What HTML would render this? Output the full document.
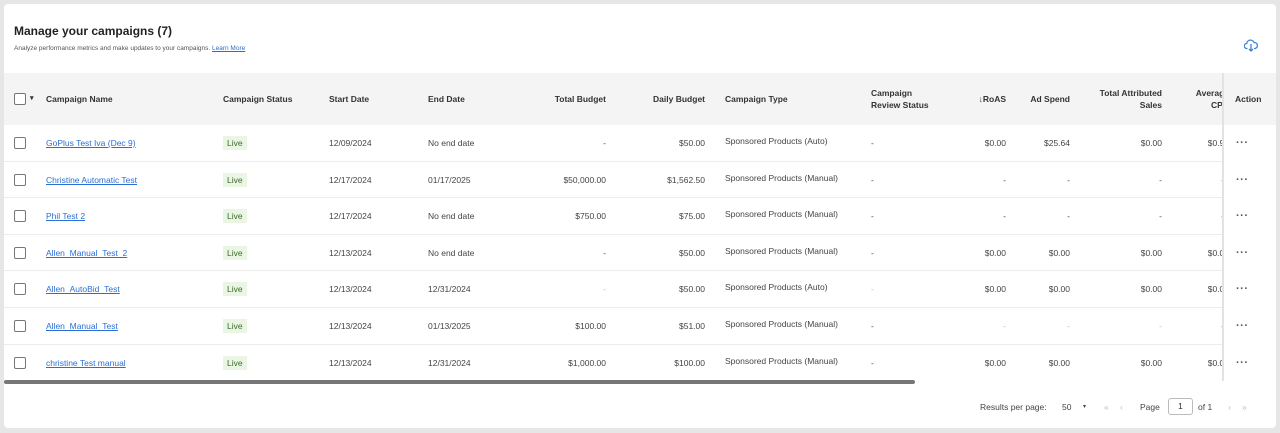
<!DOCTYPE html>
<html><head><meta charset="utf-8"><style>
*{box-sizing:border-box;margin:0;padding:0}
body{width:1280px;height:433px;background:#e6e6e6;font-family:"Liberation Sans",sans-serif;color:#2e2f32;overflow:hidden;position:relative}
.card{position:absolute;left:4px;top:4px;width:1272px;height:424px;background:#fff;border-radius:4px;overflow:hidden}
h1{position:absolute;left:10px;top:20px;font-size:12px;font-weight:bold;color:#1f2024}
.sub{position:absolute;left:10px;top:41px;font-size:6.5px;color:#555}
.sub a{color:#2a6fd6;text-decoration:underline}
.hdr{position:absolute;left:0;top:69px;width:1272px;height:52px;background:#f4f4f4}
.row{position:absolute;left:0;width:1272px;height:36.6px;border-bottom:1px solid #ececec}
.c{position:absolute;top:0;line-height:36px;font-size:8.5px;white-space:nowrap;color:#444}
.hdr .c{line-height:52px;font-weight:bold;color:#333;font-size:8.5px}
.hdr .c2{line-height:12px;top:14px;font-weight:bold;color:#333;font-size:8.5px;position:absolute}
.r{text-align:right}
.cb{position:absolute;left:10px;top:12px;width:12px;height:12px;border:1.3px solid #777;border-radius:2px;background:#fff}
.hdr .cb{top:20px}
a.n{color:#2a6fd6;text-decoration:underline}
.live{position:absolute;left:219px;top:11px;height:14px;line-height:14px;padding:0 4px;background:#eaf5e4;color:#3b6b2a;font-size:8.5px}
.act{position:absolute;left:1218px;top:69px;width:54px;height:308px;background:#fff;border-left:2px solid #e2e2e2}
.act .h{height:52px;background:#f4f4f4;line-height:52px;font-size:8.5px;font-weight:bold;color:#333;padding-left:11px}
.act .d{height:36.6px;line-height:36px;padding-left:12px;font-size:11px;font-weight:bold;color:#555;letter-spacing:0.5px}
.sb{position:absolute;left:0;top:376px;width:911px;height:4px;background:#777;border-radius:2px}
.ft{position:absolute;top:396px;font-size:8.5px;color:#444;line-height:14px}
</style></head><body>
<div class="card">
<h1>Manage your campaigns (7)</h1>
<div class="sub">Analyze performance metrics and make updates to your campaigns. <a>Learn More</a></div>
<svg style="position:absolute;left:1240px;top:34px" width="14" height="14" viewBox="0 0 14 14"><path d="M3.5 10.5H3a2.5 2.5 0 0 1-.3-5A3.8 3.8 0 0 1 10 4.5a2.8 2.8 0 0 1 .8 6H10" fill="none" stroke="#3b82d6" stroke-width="1.3"/><path d="M7 6v7M5 11l2 2 2-2" fill="none" stroke="#3b82d6" stroke-width="1.3"/></svg>
<div class="hdr">
<div class="cb"></div><div class="c" style="left:26px;font-size:7px">▾</div>
<div class="c" style="left:42px">Campaign Name</div>
<div class="c" style="left:219px">Campaign Status</div>
<div class="c" style="left:325px">Start Date</div>
<div class="c" style="left:424px">End Date</div>
<div class="c r" style="left:502px;width:100px">Total Budget</div>
<div class="c r" style="left:601px;width:100px">Daily Budget</div>
<div class="c" style="left:721px">Campaign Type</div>
<div class="c2" style="left:867px">Campaign<br>Review Status</div>
<div class="c r" style="left:956px;width:46px">↓RoAS</div>
<div class="c r" style="left:1016px;width:50px">Ad Spend</div>
<div class="c2 r" style="left:1078px;width:80px">Total Attributed<br>Sales</div>
<div class="c2 r" style="left:1170px;width:55px">Average<br>CPC</div>
</div>

<div class="row" style="top:121px"><div class="cb"></div><div class="c" style="left:42px"><a class="n">GoPlus Test Iva (Dec 9)</a></div><div class="live">Live</div><div class="c" style="left:325px">12/09/2024</div><div class="c" style="left:424px">No end date</div><div class="c r" style="left:502px;width:100px">-</div><div class="c r" style="left:601px;width:100px">$50.00</div><div class="c" style="left:721px;line-height:32px">Sponsored Products (Auto)</div><div class="c" style="left:867px">-</div><div class="c r" style="left:956px;width:46px">$0.00</div><div class="c r" style="left:1016px;width:50px">$25.64</div><div class="c r" style="left:1078px;width:80px">$0.00</div><div class="c r" style="left:1170px;width:55px">$0.92</div></div>
<div class="row" style="top:157.6px"><div class="cb"></div><div class="c" style="left:42px"><a class="n">Christine Automatic Test</a></div><div class="live">Live</div><div class="c" style="left:325px">12/17/2024</div><div class="c" style="left:424px">01/17/2025</div><div class="c r" style="left:502px;width:100px">$50,000.00</div><div class="c r" style="left:601px;width:100px">$1,562.50</div><div class="c" style="left:721px;line-height:32px">Sponsored Products (Manual)</div><div class="c" style="left:867px">-</div><div class="c r" style="left:956px;width:46px">-</div><div class="c r" style="left:1016px;width:50px">-</div><div class="c r" style="left:1078px;width:80px">-</div><div class="c r" style="left:1170px;width:50px">-</div></div>
<div class="row" style="top:194.2px"><div class="cb"></div><div class="c" style="left:42px"><a class="n">Phil Test 2</a></div><div class="live">Live</div><div class="c" style="left:325px">12/17/2024</div><div class="c" style="left:424px">No end date</div><div class="c r" style="left:502px;width:100px">$750.00</div><div class="c r" style="left:601px;width:100px">$75.00</div><div class="c" style="left:721px;line-height:32px">Sponsored Products (Manual)</div><div class="c" style="left:867px">-</div><div class="c r" style="left:956px;width:46px">-</div><div class="c r" style="left:1016px;width:50px">-</div><div class="c r" style="left:1078px;width:80px">-</div><div class="c r" style="left:1170px;width:50px">-</div></div>
<div class="row" style="top:230.8px"><div class="cb"></div><div class="c" style="left:42px"><a class="n">Allen_Manual_Test_2</a></div><div class="live">Live</div><div class="c" style="left:325px">12/13/2024</div><div class="c" style="left:424px">No end date</div><div class="c r" style="left:502px;width:100px">-</div><div class="c r" style="left:601px;width:100px">$50.00</div><div class="c" style="left:721px;line-height:32px">Sponsored Products (Manual)</div><div class="c" style="left:867px">-</div><div class="c r" style="left:956px;width:46px">$0.00</div><div class="c r" style="left:1016px;width:50px">$0.00</div><div class="c r" style="left:1078px;width:80px">$0.00</div><div class="c r" style="left:1170px;width:55px">$0.00</div></div>
<div class="row" style="top:267.4px"><div class="cb"></div><div class="c" style="left:42px"><a class="n">Allen_AutoBid_Test</a></div><div class="live">Live</div><div class="c" style="left:325px">12/13/2024</div><div class="c" style="left:424px">12/31/2024</div><div class="c r" style="left:502px;width:100px;color:#bbb">-</div><div class="c r" style="left:601px;width:100px">$50.00</div><div class="c" style="left:721px;line-height:32px">Sponsored Products (Auto)</div><div class="c" style="left:867px;color:#bbb">-</div><div class="c r" style="left:956px;width:46px">$0.00</div><div class="c r" style="left:1016px;width:50px">$0.00</div><div class="c r" style="left:1078px;width:80px">$0.00</div><div class="c r" style="left:1170px;width:55px">$0.00</div></div>
<div class="row" style="top:304px"><div class="cb"></div><div class="c" style="left:42px"><a class="n">Allen_Manual_Test</a></div><div class="live">Live</div><div class="c" style="left:325px">12/13/2024</div><div class="c" style="left:424px">01/13/2025</div><div class="c r" style="left:502px;width:100px">$100.00</div><div class="c r" style="left:601px;width:100px">$51.00</div><div class="c" style="left:721px;line-height:32px">Sponsored Products (Manual)</div><div class="c" style="left:867px">-</div><div class="c r" style="left:956px;width:46px;color:#bbb">-</div><div class="c r" style="left:1016px;width:50px;color:#bbb">-</div><div class="c r" style="left:1078px;width:80px;color:#bbb">-</div><div class="c r" style="left:1170px;width:50px">-</div></div>
<div class="row" style="top:340.6px;border:none"><div class="cb"></div><div class="c" style="left:42px"><a class="n">christine Test manual</a></div><div class="live">Live</div><div class="c" style="left:325px">12/13/2024</div><div class="c" style="left:424px">12/31/2024</div><div class="c r" style="left:502px;width:100px">$1,000.00</div><div class="c r" style="left:601px;width:100px">$100.00</div><div class="c" style="left:721px;line-height:32px">Sponsored Products (Manual)</div><div class="c" style="left:867px">-</div><div class="c r" style="left:956px;width:46px">$0.00</div><div class="c r" style="left:1016px;width:50px">$0.00</div><div class="c r" style="left:1078px;width:80px">$0.00</div><div class="c r" style="left:1170px;width:55px">$0.00</div></div>

<div class="act"><div class="h">Action</div>
<div class="d">···</div><div class="d">···</div><div class="d">···</div><div class="d">···</div><div class="d">···</div><div class="d">···</div><div class="d">···</div></div>
<div class="sb"></div>
<div class="ft" style="left:976px">Results per page:</div>
<div class="ft" style="left:1058px">50</div>
<div class="ft" style="left:1079px;font-size:6px">▾</div>
<div class="ft" style="left:1100px;color:#bbb">«</div>
<div class="ft" style="left:1116px;color:#bbb">‹</div>
<div class="ft" style="left:1136px">Page</div>
<div style="position:absolute;left:1164px;top:394px;width:25px;height:17px;border:1px solid #bbb;border-radius:3px;font-size:8.5px;text-align:center;line-height:15px">1</div>
<div class="ft" style="left:1194px">of 1</div>
<div class="ft" style="left:1224px;color:#bbb">›</div>
<div class="ft" style="left:1238px;color:#bbb">»</div>
</div>
</body></html>
